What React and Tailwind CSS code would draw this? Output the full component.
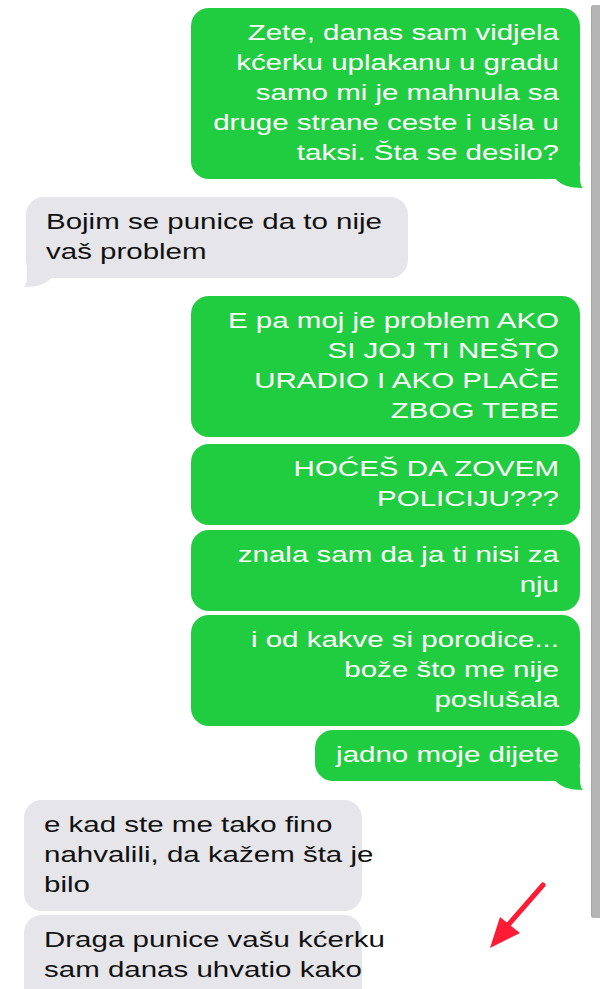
import React from "react";

// screenshot text is stretched wide, so each text block is scaled on x
function Lines({ lines, me }) {
  return (
    <div className={me ? "origin-right scale-x-[1.34]" : "origin-left scale-x-[1.34]"}>
      {lines.map((l, i) => (
        <div key={i} className={`whitespace-nowrap ${me ? "text-right" : "text-left"}`}>
          {l}
        </div>
      ))}
    </div>
  );
}

function Bubble({ me, lines, className = "", tail = false }) {
  return (
    <div
      className={`relative shrink-0 rounded-[18px] pt-[10px] text-[22px] leading-[30px] ${
        me ? "self-end bg-[#21cd40] text-white pl-[22px] pr-[21px]" : "self-start bg-[#e5e5ea] text-[#111111] pl-[20px] pr-[20px]"
      } ${className}`}
    >
      <Lines lines={lines} me={me} />
      {tail && me && (
        <svg className="absolute right-[-3px] bottom-[-10px]" width="28" height="24" viewBox="0 0 28 24">
          <path d="M0 13 C5 20 15 23 28 23 C25 20 25 15 25 8 L25 0 L0 0 Z" fill="#21cd40" />
        </svg>
      )}
      {tail && !me && (
        <svg className="absolute left-[-2px] bottom-[-10px]" width="28" height="24" viewBox="0 0 28 24">
          <path d="M28 13 C23 20 13 23 0 23 C3 20 3 15 3 8 L3 0 L28 0 Z" fill="#e5e5ea" />
        </svg>
      )}
    </div>
  );
}

export default function App() {
  return (
    <div className="relative flex h-[989px] w-full overflow-hidden bg-white font-['Liberation_Sans',Arial,sans-serif]">
      {/* Chat column */}
      <div className="flex flex-1 flex-col pt-[8px] pr-[11px]">
        <Bubble
          me
          tail
          className="w-[389px] pb-[11px]"
          lines={[
            "Zete, danas sam vidjela",
            "kćerku uplakanu u gradu",
            "samo mi je mahnula sa",
            "druge strane ceste i ušla u",
            "taksi. Šta se desilo?",
          ]}
        />
        <Bubble
          tail
          className="mt-[18px] ml-[26px] w-[382px] pb-[11px]"
          lines={["Bojim se punice da to nije", "vaš problem"]}
        />
        <Bubble
          me
          className="mt-[18px] w-[389px] pb-[11px]"
          lines={["E pa moj je problem AKO", "SI JOJ TI NEŠTO", "URADIO I AKO PLAČE", "ZBOG TEBE"]}
        />
        <Bubble me className="mt-[7px] w-[389px] pb-[11px]" lines={["HOĆEŠ DA ZOVEM", "POLICIJU???"]} />
        <Bubble me className="mt-[5px] w-[389px] pb-[11px]" lines={["znala sam da ja ti nisi za", "nju"]} />
        <Bubble
          me
          className="mt-[4px] w-[389px] pb-[11px]"
          lines={["i od kakve si porodice...", "bože što me nije", "poslušala"]}
        />
        <Bubble me tail className="mt-[4px] w-[265px] pb-[11px]" lines={["jadno moje dijete"]} />
        <Bubble
          className="mt-[19px] ml-[24px] w-[338px] pb-[11px]"
          lines={["e kad ste me tako fino", "nahvalili, da kažem šta je", "bilo"]}
        />
        <Bubble
          className="mt-[4px] ml-[24px] w-[338px] pb-[40px]"
          lines={["Draga punice vašu kćerku", "sam danas uhvatio kako"]}
        />
      </div>

      {/* Scrollbar */}
      <div className="w-[9px] shrink-0">
        <div className="mt-[5px] h-[913px] rounded-l-[3px] border-l border-[#a6a6a6] bg-[#b5b5b5]" />
      </div>

      {/* Red arrow annotation */}
      <svg className="absolute left-[484px] top-[880px]" width="66" height="74" viewBox="0 0 66 74">
        <line x1="59" y1="5" x2="24" y2="45" stroke="#fd1c35" strokeWidth="5" strokeLinecap="round" />
        <path d="M6 68 L16 37 L36 53 Z" fill="#fd1c35" />
      </svg>
    </div>
  );
}
